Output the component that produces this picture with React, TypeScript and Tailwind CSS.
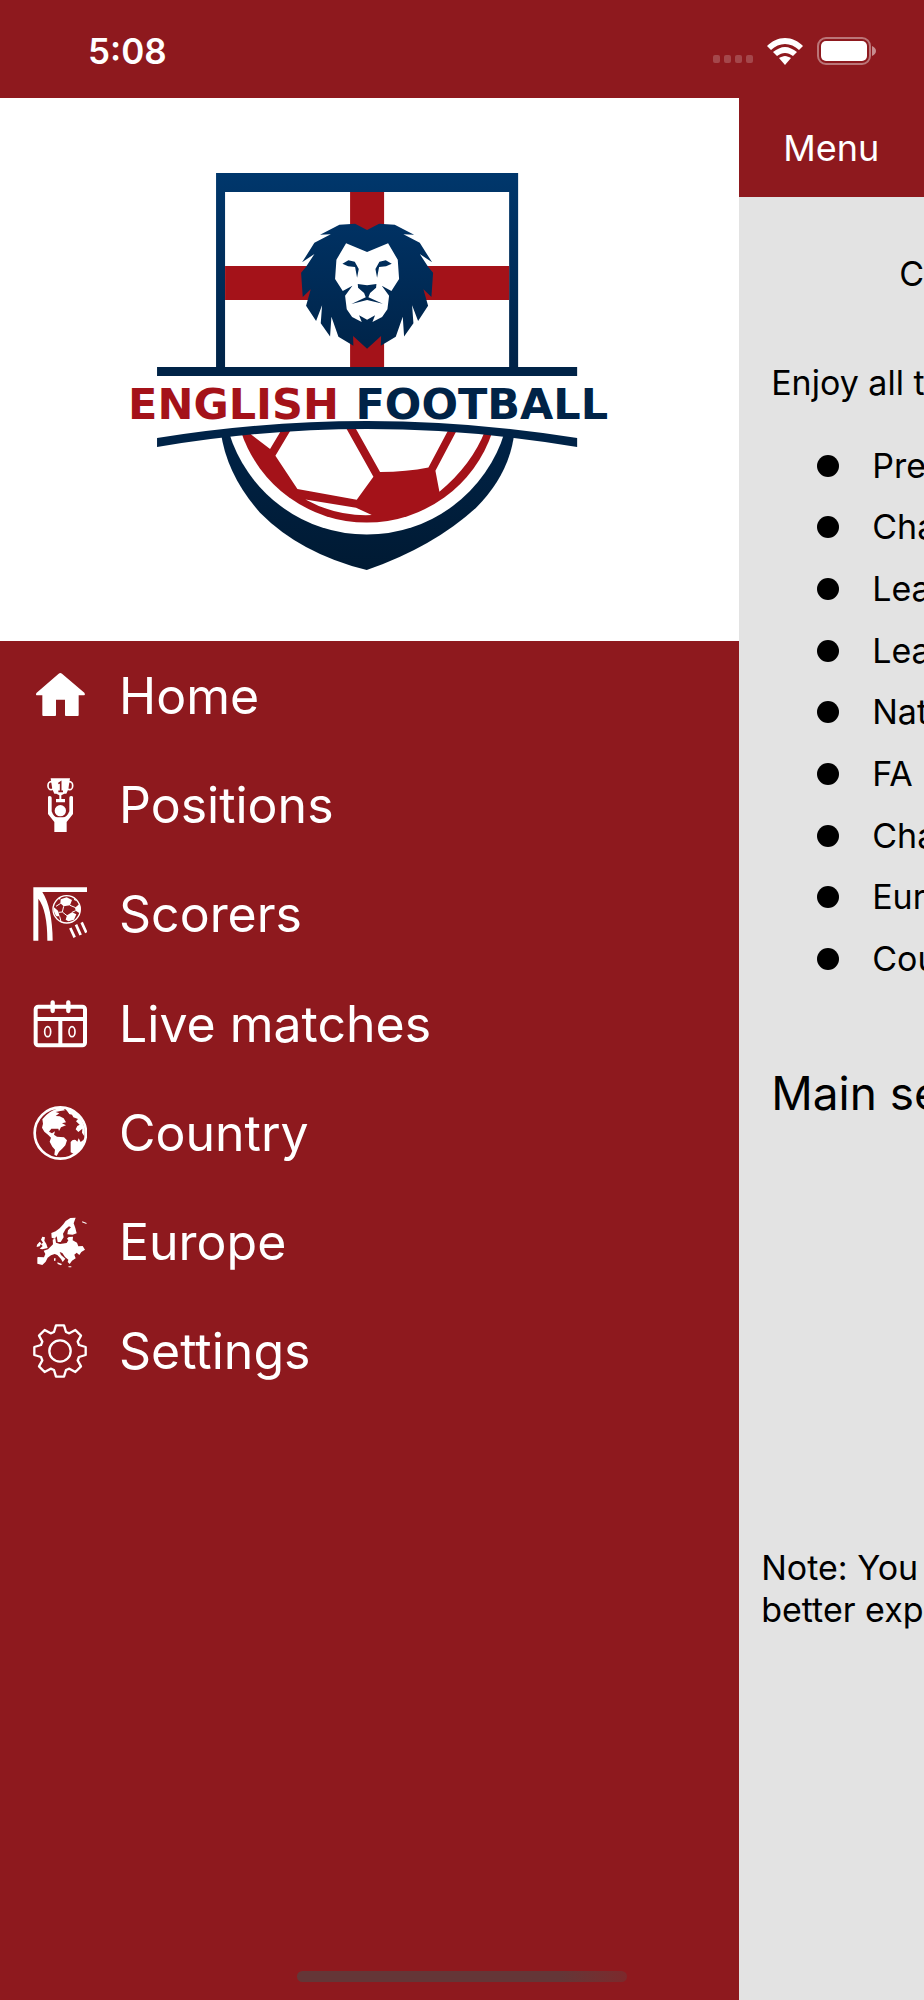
import type { ReactNode } from 'react'

interface NavItem {
  label: string
  icon: ReactNode
}

const COMPETITIONS = ['Pre', 'Cha', 'Lea', 'Lea', 'Nat', 'FA', 'Cha', 'Eur', 'Cou']

function Icon({ children }: { children: ReactNode }) {
  return (
    <svg viewBox="0 0 162 162" className="w-[54px] h-[54px] flex-shrink-0" fill="white" aria-hidden="true">
      {children}
    </svg>
  )
}

const NAV: NavItem[] = [
  {
    label: 'Home',
    icon: <path d="M77 14 Q82 10 87 14 L154 71 Q159 79 150 79 H137 V139 Q137 141 134 141 H99 Q96 141 96 139 V92 H69 V139 Q69 141 66 141 H31 Q28 141 28 139 V79 H13 Q6 78 11 71 Z" />,
  },
  {
    label: 'Positions',
    icon: (
      <>
        <g fill="none" stroke="white" strokeWidth="5">
          <ellipse cx="54" cy="23" rx="9" ry="12" />
          <ellipse cx="110" cy="23" rx="9" ry="12" />
        </g>
        <path d="M53 1 H111 L106 34 L100 47 H94 L85 52 V63 H96 V73 H69 V63 H79 V52 L70 47 H64 L58 34 Z" />
        <path d="M76 17 L83 12 V40 M76 40 H90" fill="none" stroke="#8e191e" strokeWidth="5" />
        <circle cx="82" cy="98" r="17" />
        <path d="M45 58 Q45 54 50 54 Q56 54 56 59 V100 Q62 118 74 118 H90 Q102 118 109 100 V59 Q109 54 114 54 Q120 54 120 58 V108 L101 132 V162 H64 V132 L45 108 Z" />
      </>
    ),
  },
  {
    label: 'Scorers',
    icon: (
      <>
        <path d="M1 1 H162 V15 H28 Q58 62 59 161 H43 Q43 70 16 35 V161 H1 Z" />
        <circle cx="101" cy="67" r="41" fill="none" stroke="white" strokeWidth="4" />
        <path d="M83 37 L101 31 L117 39 L111 55 L92 58 L82 49 Z M62 60 L75 71 L80 88 L70 88 Q61 76 62 60 Z M102 85 L117 76 L130 82 L123 98 L106 103 L98 98 Z M126 62 L140 50 Q145 64 140 79 L128 71 Z M76 34 L84 30 L80 38 Z M124 34 L132 43 L123 39 Z" />
        <path d="M83 49 L69 58 M92 58 L88 75 L102 86 M88 75 L77 76 M111 55 L128 62 M117 76 L128 71 M80 88 L84 104" fill="none" stroke="white" strokeWidth="3" />
        <path d="M112 123 L125 151 M129 113 L143 144 M146 106 L160 137" stroke="white" strokeWidth="8" />
      </>
    ),
  },
  {
    label: 'Live matches',
    icon: (
      <g fill="none" stroke="white">
        <rect x="8" y="29" width="148" height="116" rx="8" strokeWidth="12" />
        <path d="M8 66 H156 M82 66 V145" strokeWidth="12" />
        <path d="M59 16 V42 M106 16 V42" strokeWidth="13" strokeLinecap="round" />
        <ellipse cx="44" cy="104" rx="9" ry="15" strokeWidth="5" />
        <ellipse cx="117" cy="104" rx="9" ry="15" strokeWidth="5" />
      </g>
    ),
  },
  {
    label: 'Country',
    icon: (
      <>
        <circle cx="82" cy="81" r="77" fill="none" stroke="white" strokeWidth="8" />
        <path d="M28 40 Q46 14 82 5 Q91 6 96 13 L82 15 L68 18 L79 22 L68 30 L80 31 L92 37 L99 49 L87 52 L99 58 L84 64 L78 75 L76 68 L55 68 L48 77 L57 82 L66 76 L63 86 L72 92 L93 94 L102 103 L97 118 L89 127 L78 137 L71 150 L64 146 L66 131 L58 122 L50 107 L54 95 L45 86 L34 77 L27 65 L30 53 Z" />
        <path d="M96 6 Q137 16 151 54 Q158 74 154 91 L147 80 L148 68 L136 78 L128 70 L133 60 L140 56 L129 46 L135 39 L121 34 L117 26 L108 24 Z" />
        <path d="M113 108 Q119 99 128 102 L133 107 L137 97 L143 108 L154 100 Q147 128 124 145 L113 139 Z" />
        <path d="M91 16 L104 17 L108 24 L101 32 L89 29 L86 22 Z" fill="#8e191e" />
      </>
    ),
  },
  {
    label: 'Europe',
    icon: (
      <>
        <path d="M128 8 L112 9 L98 18 L91 28 L80 40 L68 49 L55 54 L56 68 L65 71 L71 64 L74 81 L83 81 L92 67 L90 56 L98 42 L108 34 L114 37 L105 46 L103 58 L119 59 L131 55 L127 39 L122 25 Z" />
        <path d="M59 74 L67 70 L69 83 L81 87 L101 84 L106 76 L102 71 L107 66 L120 65 L119 76 L132 83 L136 94 L149 93 L156 104 L145 111 L139 120 L131 113 L124 119 L128 130 L117 137 L110 147 L104 141 L106 134 L96 126 L88 114 L80 111 L84 120 L97 131 L89 141 L84 132 L73 120 L65 117 L54 121 L44 128 L38 140 L28 150 L13 146 L13 130 L14 126 L33 127 L37 117 L32 107 L45 103 L60 88 Z" />
        <path d="M28 65 L36 67 L34 77 L40 87 L44 99 L28 103 L20 101 L29 93 L24 88 L30 83 L24 74 Z M12 89 L20 80 L25 85 L20 94 L11 96 Z M73 142 L87 147 L84 151 L74 147 Z M63 130 L68 130 L67 138 L63 137 Z M106 154 L115 154 L115 157 L107 157 Z M148 19 L161 24 L160 27 L147 22 Z" />
      </>
    ),
  },
  {
    label: 'Settings',
    icon: (
      <g transform="translate(81 81)" fill="none" stroke="white" strokeWidth="7" strokeLinejoin="round">
        <path d="M-18 -57 L-12 -77 L12 -77 L18 -57 L28 -53 L46 -63 L63 -46 L53 -28 L57 -18 L77 -12 L77 12 L57 18 L53 28 L63 46 L46 63 L28 53 L18 57 L12 77 L-12 77 L-18 57 L-28 53 L-46 63 L-63 46 L-53 28 L-57 18 L-77 12 L-77 -12 L-57 -18 L-53 -28 L-63 -46 L-46 -63 L-28 -53 Z" />
        <circle r="32" />
      </g>
    ),
  },
]

function Logo() {
  return (
    <svg viewBox="0 98 739 543" className="block w-full" role="img" aria-label="English Football">
      <defs>
        <linearGradient id="navy" gradientUnits="userSpaceOnUse" x1="0" y1="173" x2="0" y2="370">
          <stop offset="0" stopColor="#00376c" />
          <stop offset="1" stopColor="#002347" />
        </linearGradient>
        {/* the mane and the lower shield sit on a 3x grid */}
        <linearGradient id="mane" gradientUnits="userSpaceOnUse" x1="0" y1="0" x2="0" y2="450">
          <stop offset="0" stopColor="#003366" />
          <stop offset="1" stopColor="#002347" />
        </linearGradient>
        <linearGradient id="shield" gradientUnits="userSpaceOnUse" x1="0" y1="60" x2="0" y2="480">
          <stop offset="0" stopColor="#002347" />
          <stop offset="1" stopColor="#001a33" />
        </linearGradient>
      </defs>

      {/* Flag */}
      <path d="M216 173 H518 V370 H509 V192 H225 V370 H216 Z" fill="url(#navy)" />
      <path d="M350 192 H384 V266 H509 V300 H384 V368 H350 V300 H225 V266 H350 Z" fill="#a41219" />
      <path d="M157 367 H577 V376 H157 Z" fill="#002347" />

      {/* Lion */}
      <g transform="translate(290 210) scale(0.3333)">
        <path
          fill="url(#mane)"
          d="M231 60 L195 41 L148 44 L90 74 L122 73 L73 98 L36 157 L73 132 L48 170 L33 188 L38 261 L62 238 L48 287 L78 333 L96 286 L92 340 L120 379 L124 320 L145 380 L190 407 L189 378 L231 416 L273 378 L272 407 L317 380 L338 320 L342 379 L370 340 L366 286 L384 333 L414 287 L400 238 L424 261 L429 188 L414 170 L389 132 L426 157 L389 98 L340 73 L372 74 L314 44 L267 41 Z"
        />
        <path
          fill="white"
          d="M231 126 L168 100 L139 149 L135 207 L158 243 L187 227 L165 257 L170 298 L186 321 L215 336 L207 316 L231 329 L255 316 L247 336 L276 321 L292 298 L297 257 L275 227 L304 243 L327 207 L323 149 L294 100 Z"
        />
        <path
          fill="url(#mane)"
          d="M157 161 L175 151 L194 155 L206 177 L201 203 L195 171 L174 169 Z M305 161 L287 151 L268 155 L256 177 L261 203 L267 171 L288 169 Z M203 222 L231 226 L259 222 L258 233 L240 249 L235 262 L278 281 L231 270 L184 282 L227 262 L222 249 L204 233 Z"
        />
      </g>

      {/* Lower shield and ball */}
      <g transform="translate(190 410) scale(0.3333)">
        <path d="M92 65 Q110 195 210 308 Q330 430 530 480 Q730 410 858 293 Q960 190 973 65 Z" fill="url(#shield)" />
        <path d="M116 65 A432 432 0 0 0 944 65 Q530 10 116 65 Z" fill="white" />
        <path d="M153 65 A397 397 0 0 0 907 65 Q530 15 153 65 Z" fill="#a41219" />
        <path
          fill="white"
          d="M172 62 L185 75 L240 117 L275 58 Z M303 58 L256 137 L322 237 L500 269 L550 200 L463 45 Z M491 45 L570 186 Q650 185 715 172 L777 55 Z M803 55 L736 182 L748 245 Q845 165 886 60 Z M346 268 L498 293 L545 315 Q440 320 346 268 Z"
        />
      </g>
      <path d="M157 438 Q367 404 577 438 V447 Q367 411 157 447 Z" fill="#002347" />

      <g fontFamily="'DejaVu Sans', sans-serif" fontWeight="700" fontSize="43">
        <text x="128" y="419" fill="#a41219">ENGLISH</text>
        <text x="608" y="419" textAnchor="end" fill="#002347">FOOTBALL</text>
      </g>
    </svg>
  )
}

function StatusBar() {
  return (
    <div className="flex items-center justify-between h-[98px] pt-1 pl-[88px] pr-12 text-white">
      <span className="text-[35px] leading-10 font-semibold">5:08</span>
      <div className="flex items-center gap-3.5">
        <div className="flex gap-1 pt-4">
          {[0, 1, 2, 3].map(i => <span key={i} className="w-[7px] h-2 rounded-xs bg-white/20" />)}
        </div>
        <svg viewBox="0 0 36 27" className="w-9 h-[27px]" fill="white" aria-hidden="true">
          <path d="M18 0 C25 0 31 3 36 8 L32 12 C28 8 23 6 18 6 S8 8 4 12 L0 8 C5 3 11 0 18 0 Z" />
          <path d="M18 9 C22 9 26 11 30 14 L26 18 C23 16 21 15 18 15 S13 16 10 18 L6 14 C10 11 14 9 18 9 Z" />
          <path d="M18 18 C20 18 22 19 24 20 L18 27 L12 20 C14 19 16 18 18 18 Z" />
        </svg>
        <svg viewBox="0 0 59 28" className="w-[59px] h-7" aria-hidden="true">
          <rect x="1" y="1" width="52" height="26" rx="8" fill="none" stroke="white" strokeOpacity="0.4" strokeWidth="2" />
          <rect x="4" y="4" width="46" height="20" rx="5" fill="white" />
          <path d="M55 9 Q59 11 59 14 T55 19 Z" fill="white" fillOpacity="0.5" />
        </svg>
      </div>
    </div>
  )
}

export default function App() {
  return (
    <div className="relative flex flex-col min-h-screen overflow-hidden bg-[#8e191e] font-[Inter,sans-serif]">
      <StatusBar />

      <div className="flex flex-1">
        {/* Drawer */}
        <aside className="w-4/5 flex-shrink-0">
          <div className="bg-white">
            <Logo />
          </div>
          <nav>
            <ul className="grid grid-rows-7 h-[765px]">
              {NAV.map(({ label, icon }) => (
                <li key={label} className="flex">
                  <a href="#" className="flex flex-1 items-center gap-8 pl-[33px] text-[50px] leading-none text-white">
                    <Icon>{icon}</Icon>
                    {label}
                  </a>
                </li>
              ))}
            </ul>
          </nav>
        </aside>

        {/* Page pushed aside by the drawer */}
        <main className="flex-1 min-w-0 overflow-hidden whitespace-nowrap bg-[#e3e3e3] text-[34px] leading-[42px] text-black">
          <header className="flex items-center h-[99px] pl-11 bg-[#8e191e] text-white">
            <button type="button" className="text-[36px]">Menu</button>
          </header>
          <p className="pt-14 pl-40">C</p>
          <p className="pt-[67px] pl-8">Enjoy all t</p>
          <ul className="grid grid-rows-9 h-[555px] mt-[31px] pl-[78px]">
            {COMPETITIONS.map((name, i) => (
              <li key={i} className="flex items-center gap-[33px]">
                <span className="w-[22px] h-[22px] flex-shrink-0 rounded-full bg-black" />
                {name}
              </li>
            ))}
          </ul>
          <h2 className="pt-[75px] pl-8 text-[46px] leading-[56px]">Main se</h2>
          <p className="pt-[426px] pl-[22px]">
            Note: You<br />better exp
          </p>
        </main>
      </div>

      {/* Home indicator */}
      <div className="absolute bottom-[18px] left-1/2 w-[330px] h-[11px] -translate-x-1/2 rounded-full bg-linear-to-r from-[#643637] from-80% to-[#7c292c]" />
    </div>
  )
}
